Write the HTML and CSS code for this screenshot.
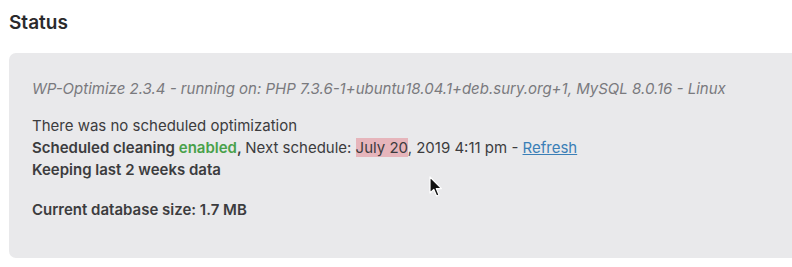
FILE: index.html
```html
<!DOCTYPE html>
<html lang="en">

<head>
    <meta charset="UTF-8">
    <title>WP-Optimize Status</title>
    <link rel="stylesheet" href="styles.css">
</head>

<body>
    <div class="page">
        <h2 class="section-title">Status</h2>

        <div class="status-box">
            <p class="version">WP-Optimize 2.3.4 - running on: PHP 7.3.6-1+ubuntu18.04.1+deb.sury.org+1, MySQL 8.0.16 - Linux</p>

            <div class="schedule">
                <p>There was no scheduled optimization</p>
                <p><strong>Scheduled cleaning <span class="enabled">enabled</span>, </strong>Next schedule: <span class="mark">July 20</span>, 2019 4:11 pm - <a href="#" class="refresh">Refresh</a></p>
                <p><strong>Keeping last 2 weeks data</strong></p>
            </div>

            <p class="db-size"><strong>Current database size: 1.7 MB</strong></p>

            <svg class="cursor" width="14" height="22" viewBox="0 0 14 22">
                <path d="M1 1 L1 17 L4.8 13.4 L7.6 20 L10 19 L7.3 12.6 L12.5 12.6 Z" fill="#111" stroke="#fff" stroke-width="1.2" stroke-linejoin="round" />
            </svg>
        </div>
    </div>
</body>

</html>
```

FILE: styles.css
```css
:root {
    --text: #3c3c3e;
    --muted: #7a7a7e;
    --box: #e9e9eb;
    --green: #48a14a;
    --link: #3b7fb7;
    --mark: #e6b5bb;
}

body {
    margin: 0;
    background: #fff;
    color: var(--text);
    font-family: Inter, 'Liberation Sans', Arial, sans-serif;
    overflow: hidden;
}

.page {
    padding-left: 9px;
}

.section-title {
    margin: 11px 0 18px;
    font-size: 19px;
    line-height: 24px;
    font-weight: 600;
    color: #2a2a2c;
}

.status-box {
    position: relative;
    background: var(--box);
    border-radius: 7px;
    margin-right: -20px;
    padding: 25px 23px 37px;
    font-size: 15px;
    line-height: 22px;
}

.status-box p {
    margin: 0;
}

.status-box strong {
    font-weight: 600;
}

.version {
    font-style: italic;
    color: var(--muted);
}

.schedule {
    margin: 15px 0 18px;
}

.enabled {
    color: var(--green);
}

.mark {
    background: var(--mark);
}

.refresh {
    color: var(--link);
}

.cursor {
    position: absolute;
    left: 420px;
    top: 123px;
}
```
